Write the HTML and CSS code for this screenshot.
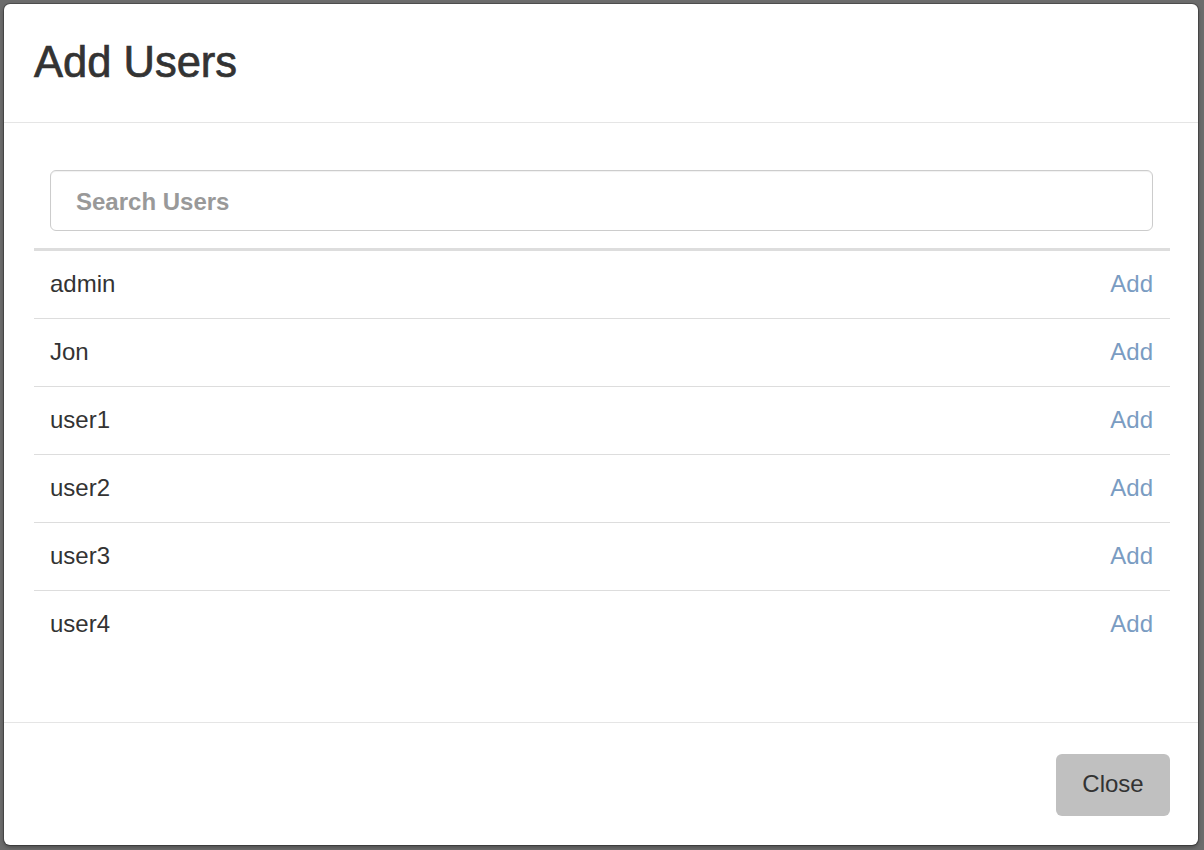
FILE: index.html
```html
<!DOCTYPE html>
<html>
<head>
<meta charset="utf-8">
<link rel="stylesheet" href="styles.css">
</head>
<body>
<div class="backdrop">
  <div class="modal">
    <div class="modal-header">
      <h3 class="modal-title">Add Users</h3>
    </div>
    <div class="modal-body">
      <div class="search-wrap">
        <input class="search" type="text" placeholder="Search Users">
      </div>
      <div class="user-table">
        <div class="user-row"><span class="user-name">admin</span><a class="add-link">Add</a></div>
        <div class="user-row"><span class="user-name">Jon</span><a class="add-link">Add</a></div>
        <div class="user-row"><span class="user-name">user1</span><a class="add-link">Add</a></div>
        <div class="user-row"><span class="user-name">user2</span><a class="add-link">Add</a></div>
        <div class="user-row"><span class="user-name">user3</span><a class="add-link">Add</a></div>
        <div class="user-row"><span class="user-name">user4</span><a class="add-link">Add</a></div>
      </div>
    </div>
    <div class="modal-footer">
      <button class="btn-close">Close</button>
    </div>
  </div>
</div>
</body>
</html>
```
FILE: styles.css
```css
html, body {
  margin: 0;
  padding: 0;
  height: 100%;
}
body {
  background: #6c6c6c;
  font-family: "Liberation Sans", Arial, Helvetica, sans-serif;
  color: #333;
}
.backdrop {
  padding: 4px 0 0 4px;
}
.modal {
  box-sizing: border-box;
  width: 1194px;
  height: 841px;
  background: #fff;
  border-radius: 6px;
  box-shadow: 0 0 0 1px rgba(0,0,0,0.25), 0 2px 4px rgba(0,0,0,0.35);
  display: flex;
  flex-direction: column;
}
.modal-header {
  height: 118px;
  border-bottom: 1px solid #e5e5e5;
  padding: 0 30px;
  display: flex;
  align-items: center;
}
.modal-title {
  margin: 0;
  font-size: 43.5px;
  font-weight: normal;
  line-height: 1.1;
  color: #333;
  -webkit-text-stroke: 0.7px #333;
}
.modal-body {
  flex: 1;
  padding: 47px 28px 0 30px;
}
.search-wrap {
  padding: 0 17px 0 16px;
  margin-bottom: 17px;
}
.search {
  box-sizing: border-box;
  display: block;
  width: 100%;
  height: 61px;
  border: 1.5px solid #cccccc;
  border-radius: 6px;
  padding: 2px 25px 0;
  font-family: "Liberation Sans", Arial, Helvetica, sans-serif;
  font-size: 24px;
  font-weight: bold;
  color: #555;
  box-shadow: inset 0 1px 1px rgba(0,0,0,0.06);
  outline: none;
}
.search::placeholder {
  color: #999;
}
.user-table {
  border-top: 3px solid #dddddd;
}
.user-row {
  box-sizing: border-box;
  height: 67px;
  display: flex;
  align-items: center;
  justify-content: space-between;
  padding: 0 17px 2px 16px;
  font-size: 24px;
}
.user-row + .user-row {
  border-top: 1px solid #dddddd;
  height: 68px;
}
.user-name {
  color: #333;
}
.add-link {
  color: #7a9cc2;
  text-decoration: none;
}
.modal-footer {
  border-top: 1px solid #e5e5e5;
  padding: 31px 28px 29px;
  display: flex;
  justify-content: flex-end;
}
.btn-close {
  width: 114px;
  height: 62px;
  border: none;
  border-radius: 6px;
  background: #c0c0c0;
  color: #333;
  font-family: "Liberation Sans", Arial, Helvetica, sans-serif;
  font-size: 24px;
  padding: 0 0 2px;
}
```
